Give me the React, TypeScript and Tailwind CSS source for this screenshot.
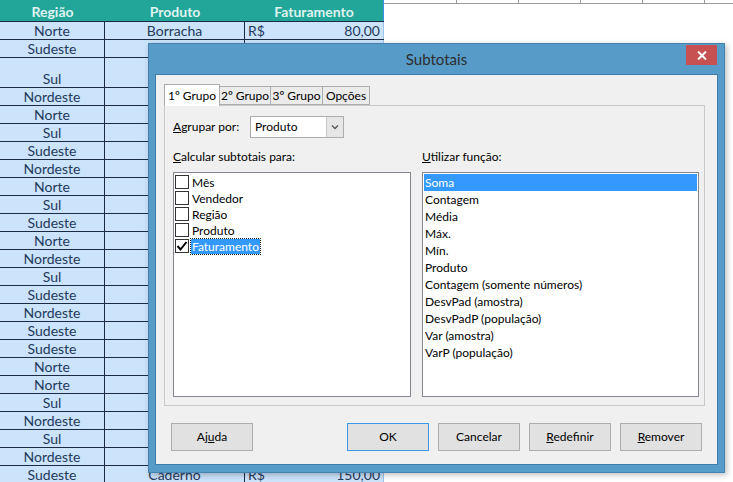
import React from "react";

const regions = [
  "Norte", "Sudeste", "Sul", "Nordeste", "Norte", "Sul", "Sudeste", "Nordeste", "Norte", "Sul",
  "Sudeste", "Norte", "Nordeste", "Sul", "Sudeste", "Nordeste", "Sudeste", "Sudeste", "Norte", "Norte",
  "Sul", "Nordeste", "Sul", "Nordeste", "Sudeste",
];

const fields = ["Mês", "Vendedor", "Região", "Produto", "Faturamento"];

const functions = [
  "Soma", "Contagem", "Média", "Máx.", "Mín.", "Produto", "Contagem (somente números)",
  "DesvPad (amostra)", "DesvPadP (população)", "Var (amostra)", "VarP (população)",
];

const SheetRow: React.FC<{ region: string; index: number }> = ({ region, index }) => {
  const first = index === 0;
  const last = index === regions.length - 1;
  const tall = index === 2;
  return (
    <div
      className={`grid grid-cols-[105px_140px_139px] border-b border-[#1b2a47] bg-[#cbe3fb] ${
        tall ? "h-[30px] items-end" : "h-[18px] items-center"
      }`}
    >
      <div className="text-center border-r border-[#1b2a47] h-full flex items-end justify-center leading-[17px]">{region}</div>
      <div className="text-center border-r border-[#1b2a47] h-full flex items-end justify-center leading-[17px]">
        {first ? "Borracha" : last ? "Caderno" : ""}
      </div>
      <div className="h-full flex items-end justify-between pl-[3px] pr-[3px] leading-[17px] border-r border-[#9fc4ea]">
        {first && (
          <>
            <span>R$</span>
            <span>80,00</span>
          </>
        )}
        {last && (
          <>
            <span>R$</span>
            <span>150,00</span>
          </>
        )}
      </div>
    </div>
  );
};

const Btn: React.FC<{ children: React.ReactNode; primary?: boolean; className?: string }> = ({
  children,
  primary,
  className,
}) => (
  <div
    className={`w-[82px] h-[28px] flex items-center justify-center bg-[#e1e1e1] border ${
      primary ? "border-[#3c97e6]" : "border-[#adadad]"
    } ${className ?? ""}`}
  >
    {children}
  </div>
);

const App: React.FC = () => {
  return (
    <div
      className="relative w-[733px] h-[482px] overflow-hidden bg-white"
      style={{ fontFamily: "Lato, 'Liberation Sans', sans-serif" }}
    >
      {/* spreadsheet */}
      <div className="flex text-[14px] text-[#1f3a5c]">
        <div className="w-[384px]">
          <div className="grid grid-cols-[105px_140px_139px] h-[22px] bg-[#22a699] border-b border-[#1b2a47] font-bold text-[#dff3f0]">
            <div className="flex items-end justify-center leading-[19px]">Região</div>
            <div className="flex items-end justify-center leading-[19px]">Produto</div>
            <div className="flex items-end justify-center leading-[19px] border-r border-[#3d8fe0]">Faturamento</div>
          </div>
          {regions.map((r, i) => (
            <SheetRow key={i} region={r} index={i} />
          ))}
        </div>
        <div className="flex-1 flex h-[4px] border-b border-[#9a9a9a]">
          <div className="w-[73px] border-r border-[#9a9a9a]" />
          <div className="w-[62px] border-r border-[#9a9a9a]" />
          <div className="w-[62px] border-r border-[#9a9a9a]" />
          <div className="w-[62px] border-r border-[#9a9a9a]" />
          <div className="w-[62px] border-r border-[#9a9a9a]" />
        </div>
      </div>

      {/* dialog */}
      <div
        className="absolute left-[148px] top-[43px] w-[577px] h-[430px] bg-[#579bc8] border border-[#4682b0] flex flex-col text-[12px] text-black shadow-[2px_2px_6px_rgba(0,0,0,0.25)]"
        style={{ fontFamily: "Lato, 'Liberation Sans', sans-serif" }}
      >
        <div className="relative h-[30px] flex items-center justify-center text-[15px] text-[#2d2d2d]">
          Subtotais
          <div className="absolute right-[7px] top-[1px] w-[31px] h-[20px] bg-[#c75050] flex items-center justify-center">
            <svg width="10" height="9" viewBox="0 0 10 9">
              <path d="M1 0.5 L9 8.5 M9 0.5 L1 8.5" stroke="white" strokeWidth="2" />
            </svg>
          </div>
        </div>
        <div className="flex-1 mx-[6px] mb-[7px] bg-[#f0f0f0] border border-[#3f7cab] flex flex-col pt-[9px] pl-[8px] pr-[10px]">
          {/* tabs */}
          <div className="flex items-end h-[21px] relative z-10">
            <div className="w-[56px] h-[22px] bg-white border border-b-0 border-[#acacac] flex items-center justify-center -mb-px">
              1º Grupo
            </div>
            <div className="w-[51px] h-[19px] bg-[#ebebeb] border border-l-0 border-[#acacac] flex items-center justify-center">
              2º Grupo
            </div>
            <div className="w-[52px] h-[19px] bg-[#ebebeb] border border-l-0 border-[#acacac] flex items-center justify-center">
              3º Grupo
            </div>
            <div className="w-[47px] h-[19px] bg-[#ebebeb] border border-l-0 border-[#acacac] flex items-center justify-center">
              Opções
            </div>
          </div>
          {/* panel */}
          <div className="w-[541px] h-[301px] border border-[#c9c9c9] bg-[#f0f0f0] pl-[8px] pt-[10px]">
            <div className="flex items-center h-[22px]">
              <div className="w-[77px]">
                <span className="underline">A</span>grupar por:
              </div>
              <div className="w-[94px] h-[22px] bg-white border border-[#acacac] flex items-center justify-between pl-[4px]">
                <span>Produto</span>
                <div className="w-[17px] h-[20px] bg-[#e6e6e6] border-l border-[#c8c8c8] flex items-center justify-center">
                  <svg width="8" height="5" viewBox="0 0 8 5">
                    <path d="M1 0.5 L4 3.5 L7 0.5" stroke="#555" strokeWidth="1.3" fill="none" />
                  </svg>
                </div>
              </div>
            </div>
            <div className="flex mt-[12px] h-[14px] items-center">
              <div className="w-[249px]">
                <span className="underline">C</span>alcular subtotais para:
              </div>
              <div>
                <span className="underline">U</span>tilizar função:
              </div>
            </div>
            <div className="flex gap-[11px] mt-[8px]">
              <div className="w-[238px] h-[225px] bg-white border border-[#828790] pt-px pl-px">
                {fields.map((f, i) => {
                  const checked = f === "Faturamento";
                  return (
                    <div key={f} className="flex items-center h-[16px]">
                      <div className="w-[14px] h-[14px] border border-[#333] bg-white flex items-center justify-center">
                        {checked && (
                          <svg width="12" height="12" viewBox="0 0 12 12">
                            <path d="M1.5 6 L4.5 9.5 L10.5 2" stroke="#000" strokeWidth="2" fill="none" />
                          </svg>
                        )}
                      </div>
                      <span
                        className={`ml-[2px] leading-[15px] ${
                          checked ? "bg-[#3399ff] text-white outline-1 outline-dotted outline-[#222] px-[1px]" : "px-[1px]"
                        }`}
                      >
                        {f}
                      </span>
                    </div>
                  );
                })}
              </div>
              <div className="w-[277px] h-[225px] bg-white border border-[#828790] p-px">
                {functions.map((f, i) => (
                  <div
                    key={f}
                    className={`h-[17px] flex items-center pl-[1px] ${i === 0 ? "bg-[#3399ff] text-white" : ""}`}
                  >
                    {f}
                  </div>
                ))}
              </div>
            </div>
          </div>
          {/* buttons */}
          <div className="flex mt-[17px] pl-[7px] pr-[5px]">
            <Btn className="w-[76px]">
              <span>
                Aj<span className="underline">u</span>da
              </span>
            </Btn>
            <div className="flex-1" />
            <div className="flex gap-[9px]">
              <Btn primary>OK</Btn>
              <Btn>Cancelar</Btn>
              <Btn>
                <span>
                  <span className="underline">R</span>edefinir
                </span>
              </Btn>
              <Btn>
                <span>
                  <span className="underline">R</span>emover
                </span>
              </Btn>
            </div>
          </div>
        </div>
      </div>
    </div>
  );
};

export default App;
